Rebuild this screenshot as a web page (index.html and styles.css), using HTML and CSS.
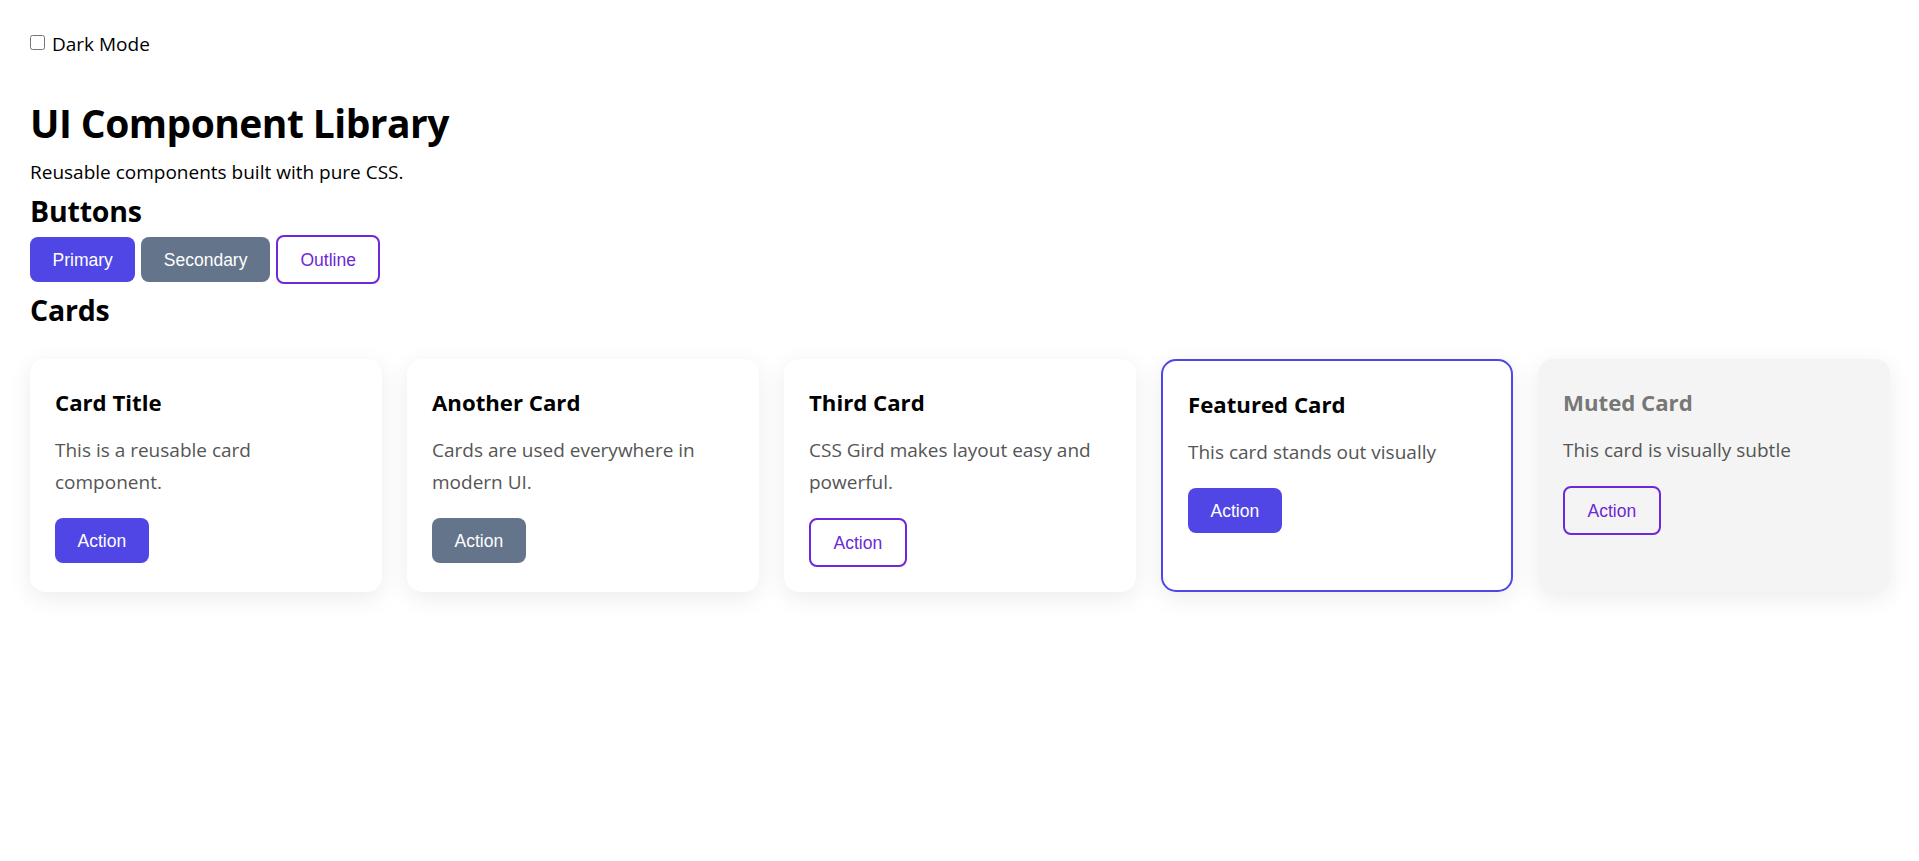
FILE: index.html
```html
<!DOCTYPE html>
<html lang="en">
<head>
<meta charset="utf-8">
<title>UI Component Library</title>
<link rel="stylesheet" href="styles.css">
</head>
<body>
  <label class="theme-toggle">
    <input type="checkbox" class="theme-checkbox">
    <span>Dark Mode</span>
  </label>

  <header class="page-header">
    <h1 class="page-title">UI Component Library</h1>
    <p class="page-intro">Reusable components built with pure CSS.</p>
  </header>

  <section class="section">
    <h2 class="section-title">Buttons</h2>
    <div class="button-row">
      <button class="btn btn-primary">Primary</button>
      <button class="btn btn-secondary">Secondary</button>
      <button class="btn btn-outline">Outline</button>
    </div>
  </section>

  <section class="section">
    <h2 class="section-title">Cards</h2>
    <div class="card-grid">
      <article class="card">
        <h3 class="card-title">Card Title</h3>
        <p class="card-text">This is a reusable card component.</p>
        <div><button class="btn btn-primary">Action</button></div>
      </article>
      <article class="card">
        <h3 class="card-title">Another Card</h3>
        <p class="card-text">Cards are used everywhere in modern UI.</p>
        <div><button class="btn btn-secondary">Action</button></div>
      </article>
      <article class="card">
        <h3 class="card-title">Third Card</h3>
        <p class="card-text">CSS Gird makes layout easy and powerful.</p>
        <div><button class="btn btn-outline">Action</button></div>
      </article>
      <article class="card card-featured">
        <h3 class="card-title">Featured Card</h3>
        <p class="card-text">This card stands out visually</p>
        <div><button class="btn btn-primary">Action</button></div>
      </article>
      <article class="card card-muted">
        <h3 class="card-title">Muted Card</h3>
        <p class="card-text">This card is visually subtle</p>
        <div><button class="btn btn-outline">Action</button></div>
      </article>
    </div>
  </section>
</body>
</html>
```
FILE: styles.css
```css
* {
  box-sizing: content-box;
}

html, body {
  background: #ffffff;
}

body {
  margin: 0;
  padding: 30px 29px 30px 30px;
  font-family: "Open Sans", "Noto Sans", sans-serif;
  font-size: 19px;
  line-height: 26px;
  color: #000000;
}

.theme-toggle {
  display: flex;
  align-items: flex-start;
  line-height: 28px;
  height: 28px;
}

.theme-checkbox {
  width: 15px;
  height: 15px;
  margin: 5px 7px 0 0;
}

.page-title {
  margin: 41px 0 12px;
  font-size: 39px;
  line-height: 48px;
  font-weight: 700;
  letter-spacing: -0.55px;
}

.page-intro {
  margin: 0;
  font-size: 19px;
  line-height: 26px;
}

.section-title {
  margin: 8px 0 6px;
  font-size: 28.5px;
  line-height: 36px;
  font-weight: 700;
  letter-spacing: -0.2px;
}

.button-row {
  display: flex;
  align-items: center;
  gap: 6px;
}

.btn {
  font-family: "Liberation Sans", Arial, sans-serif;
  font-size: 17.5px;
  line-height: 20px;
  padding: 12.5px 22.5px;
  border: none;
  border-radius: 8px;
  color: #ffffff;
  cursor: pointer;
}

.btn-primary {
  background: #4f46e5;
}

.btn-secondary {
  background: #64748b;
}

.btn-outline {
  background: transparent;
  border: 2px solid #6d28d9;
  color: #6d28d9;
}

.card-grid {
  margin-top: 31px;
  display: grid;
  grid-template-columns: repeat(5, 1fr);
  gap: 25px;
}

.card {
  background: #ffffff;
  padding: 25px;
  border-radius: 15px;
  box-shadow: 0 6px 24px rgba(0, 0, 0, 0.08);
}

.card-featured {
  border: 2px solid #4f46e5;
}

.card-muted {
  background: #f4f4f4;
}

.card-title {
  margin: 4px 0 16px;
  font-size: 22.2px;
  line-height: 30px;
  font-weight: 700;
}

.card-muted .card-title {
  color: #777777;
}

.card-text {
  margin: 0 0 20px;
  font-size: 19px;
  line-height: 32px;
  color: #555555;
}
```
